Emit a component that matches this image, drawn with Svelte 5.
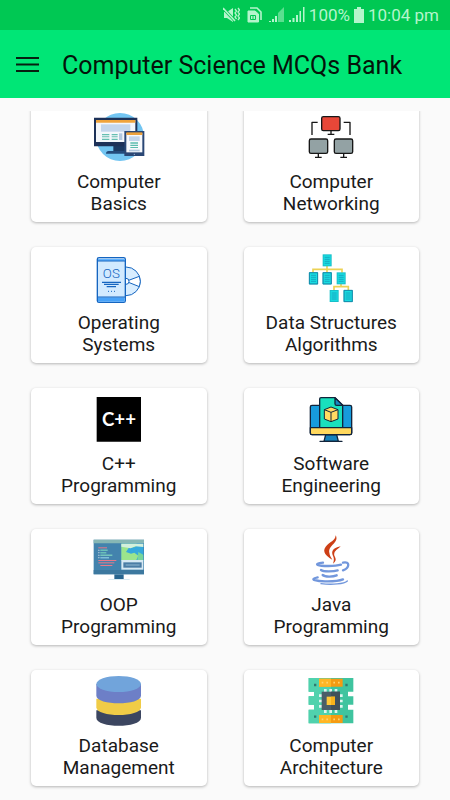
<script>
	// viewBox of each icon is 192 x 150, three units to a pixel
	const topics = [
		{ icon: 'basics', lines: ['Computer', 'Basics'], box: '21 36 192 150' },
		{ icon: 'network', lines: ['Computer', 'Networking'], box: '28 36 192 150' },
		{ icon: 'os', lines: ['Operating', 'Systems'], box: '21 24 192 150' },
		{ icon: 'tree', lines: ['Data Structures', 'Algorithms'], box: '28 24 192 150' },
		{ icon: 'cpp', lines: ['C++', 'Programming'], box: '21 27 192 150' },
		{ icon: 'software', lines: ['Software', 'Engineering'], box: '28 27 192 150' },
		{ icon: 'oop', lines: ['OOP', 'Programming'], box: '21 31 192 150' },
		{ icon: 'java', lines: ['Java', 'Programming'], box: '28 31 192 150' },
		{ icon: 'database', lines: ['Database', 'Management'], box: '201 36 192 150' },
		{ icon: 'chip', lines: ['Computer', 'Architecture'], box: '28 36 192 150' }
	];

	const sheets = [
		[99, 28],
		[58, 82],
		[99, 82],
		[141, 82],
		[120, 135],
		[162, 135]
	];

	// code lines on the OOP monitor: x, y, width, colour
	const code = [
		[55, 68, 26, '#e8798a'],
		[61, 75, 22, '#7fe0c0'],
		[61, 83, 18, '#7fe0c0'],
		[61, 90, 36, '#8fe6c4'],
		[61, 98, 26, '#9fdcf0'],
		[55, 106, 54, '#e8798a'],
		[55, 113, 48, '#e8798a'],
		[61, 121, 36, '#e8798a']
	];
</script>

<div class="screen">
	<header>
		<div class="status">
			<svg width="17" height="16" viewBox="0 0 17 16" fill="currentColor">
				<path d="M1 5h3l6-4v14l-6-4H1z" />
				<path d="M0 1l12 13" stroke="#00c853" stroke-width="3" />
				<path d="M0 1l12 13" stroke="currentColor" stroke-width="1.6" />
				<path
					d="M12 2l1.5 2L12 6l1.5 2L12 10l1.5 2M15 1l1.5 2L15 5l1.5 2L15 9l1.5 2L15 13"
					fill="none"
					stroke="currentColor"
					stroke-width="1.3"
				/>
			</svg>
			<svg class="sim" width="15" height="16" viewBox="0 0 15 16" fill="none" stroke="currentColor">
				<path d="M3 1h7l4 4v8" stroke-width="1.6" />
				<path d="M1 4h7l3.500 3v8H1z" fill="currentColor" />
				<path d="M3.500 8.500h5v4h-5zM6 8.500v4" stroke="#00c853" />
			</svg>
			<svg width="16" height="16" viewBox="0 0 16 16" fill="currentColor">
				<path d="M0 15h2v-1H0zM3 15h2v-3H3zM6 15h2V9H6z" />
				<path d="M9 15V6l6-6v15z" opacity="0.5" />
			</svg>
			<svg width="16" height="16" viewBox="0 0 16 16" fill="currentColor">
				<path d="M0 15h2v-2H0zM3.500 15h2v-4h-2zM7 15h2V8H7zM10.500 15h1.500V4h-1.500zM14 15h1.500V0H14z" />
			</svg>
			<span>100%</span>
			<svg width="10" height="16" viewBox="0 0 10 16" fill="currentColor">
				<path d="M3 0h4v2h3v14H0V2h3z" />
			</svg>
			<span>10:04 pm</span>
		</div>
		<div class="toolbar">
			<button class="menu" aria-label="Menu">
				<svg width="23" height="16" viewBox="0 0 23 16" stroke="#062010" stroke-width="2">
					<path d="M0 2h23M0 8.500h23M0 15h23" />
				</svg>
			</button>
			<h1>Computer Science MCQs Bank</h1>
		</div>
	</header>

	<main>
		<div class="scroller">
			<div class="grid">
				{#each topics as topic}
					<button class="card">
						<svg class="icon" viewBox={topic.box} aria-hidden="true">
							{#if topic.icon === 'basics'}
								<circle cx="120" cy="111" r="72" fill="#72c5f2" />
								<path d="M100 138h38v16h-38z" fill="#1b3a63" />
								<path d="M78 161q0-8 8-8h54v8z" fill="#234b7c" />
								<path d="M42 53h130v86H42z" fill="#1d3158" />
								<path d="M48 60h118v66H48z" fill="#f4f7fb" />
								<path d="M48 60h118v8H48z" fill="#f0a43c" />
								<path d="M63 73h88v22H63z" fill="#c3d6ec" />
								<path d="M66 102h22v4H66zM95 102h18v4H95zM66 109h22v3H66zM95 109h18v3H95zM66 116h22v4H66zM95 116h18v4H95z" fill="#65bfb1" />
								<path d="M117 100h10v20h-10z" fill="#b3c9e0" />
								<path d="M133 93h60v75h-60z" fill="#2a4775" />
								<path d="M139 99h48v58h-48z" fill="#f7f9fc" />
								<path d="M139 97h48v8h-48z" fill="#eda23c" />
								<path d="M147 109h32v14h-32z" fill="#c3d6ec" />
								<path d="M151 127h23v4h-23zM151 134h23v4h-23zM151 141h23v3h-23z" fill="#5cbcae" />
								<path d="M147 149h32v5h-32z" fill="#b3c9e0" />
								<circle cx="163" cy="163" r="2" fill="#9db7d8" />
							{:else if topic.icon === 'network'}
								<g stroke="#171717" stroke-width="4" stroke-linejoin="round">
									<path d="M67 105V67h17M162 67h19v38" fill="none" />
									<rect x="96" y="50" width="55" height="42" rx="5" fill="#e84738" />
									<path d="M124 92v11M114 103h20" />
									<rect x="59" y="117" width="55" height="43" rx="5" fill="#93a2a4" />
									<path d="M86 160v11M76 172h20" />
									<rect x="134" y="117" width="55" height="43" rx="5" fill="#93a2a4" />
									<path d="M162 160v11M152 172h20" />
								</g>
							{:else if topic.icon === 'os'}
								<g stroke="#1565c0" stroke-width="3" fill="none">
									<circle cx="138" cy="109" r="43" fill="#d8edff" />
									<path d="M138 109l40-15q6 15 0 31z" fill="#fff" />
									<circle cx="138" cy="109" r="9" fill="#fff" />
									<rect x="52" y="38" width="84" height="134" rx="5" fill="#d2eaff" stroke-width="4" />
									<path d="M54 42h80v6H54z" fill="#62b3ff" stroke="none" />
									<path d="M54 157h80v13H54z" fill="#48a2f8" stroke="none" />
									<path d="M53 48h82M53 156h82" />
									<path d="M66 112h57M72 118h44M80 125h28" stroke-width="4" />
									<path d="M84 139h3M93 139h3M102 139h3" stroke-width="3" />
								</g>
								<text class="os" x="94" y="98" text-anchor="middle">OS</text>
							{:else if topic.icon === 'tree'}
								<path
									d="M112 63v20M70 83V73h87v10M154 117v9M133 135v-10h43v10"
									fill="none"
									stroke="#ecd255"
									stroke-width="5"
								/>
								{#each sheets as [x, y]}
									<g transform="translate({x} {y})">
										<path d="M0 0h27v36H0z" fill="#17bfc9" />
										<path d="M3 3h21v30H3z" fill="#18dce0" />
										<path d="M6 9h15M6 15h15M6 21h15M6 27h15" stroke="#168fb4" stroke-width="2" />
									</g>
								{/each}
								<path d="M59 83h25v34H59zM100 83h25v34h-25zM163 136h25v34h-25z" fill="none" stroke="#168bab" stroke-width="3" />
							{:else if topic.icon === 'cpp'}
								<path d="M50 36h133v134H50z" fill="#000" />
								<text class="cpp" x="117" y="123" text-anchor="middle">C++</text>
							{:else if topic.icon === 'software'}
								<g stroke="#12243b" stroke-width="4" stroke-linejoin="round">
									<path d="M108 149h33l5 20h-43z" fill="#1583bd" />
									<path d="M91 169h66" stroke-linecap="round" />
									<rect x="62" y="61" width="124" height="88" rx="5" fill="#179bdc" />
									<path d="M90 128V42q0-4 4-4h42l23 23v67z" fill="#19e0bd" />
									<path d="M136 38v18q0 5 5 5h18z" fill="#168ac4" />
									<path d="M62 128h124v16q0 5-5 5H67q-5 0-5-5z" fill="#ffd85d" />
									<path d="M104 74l20-8 21 8v28l-21 8-20-8z" fill="#ffda62" stroke-width="3" />
									<path d="M104 74l20 8 21-8M124 82v28" fill="none" stroke-width="3" />
								</g>
							{:else if topic.icon === 'oop'}
								<path d="M85 163h64v3H85z" fill="#d8eaf2" />
								<path d="M103 149h28v14h-28z" fill="#28658f" />
								<path d="M41 45h151v104H41z" fill="#4383ad" />
								<path d="M41 45h151v11H41z" fill="#87b7b5" />
								<path d="M41 136h151v13H41z" fill="#3c789f" />
								{#each code as [x, y, w, color]}
									<path d="M{x} {y}h{w}v3h-{w}z" fill={color} />
								{/each}
								<path d="M55 76h3v1h-3zM55 84h3v1h-3zM55 91h3v1h-3zM55 99h3v1h-3z" fill="#fff" stroke="#fff" />
								<path d="M124 57h66v51h-66z" fill="#36a9dc" />
								<path d="M124 57h46l-4 10-20 3-8 12 15 5 10-3 12 9-7 15h-44z" fill="#9be58c" />
								<path d="M124 57h66v10l-24-2-14 6-28-5z" fill="#d3f0dc" />
								<path d="M175 82l15 8v18h-18z" fill="#77d69b" />
								<path d="M124 106h66v29h-66z" fill="#d7e9f3" />
								<path d="M130 113h55v16h-55z" fill="#4b7da5" />
								<path d="M137 121h42" stroke="#93bad2" stroke-width="3" />
							{:else if topic.icon === 'java'}
								<path d="M138 32c12 23-23 29-19 52 1 9 5 14 9 21-17-10-32-23-20-39 12-15 29-17 30-34z" fill="#cd3f16" />
								<path d="M153 65c-15 3-28 10-25 23 2 8 8 13 2 29 18-15 0-20 4-32 3-9 14-13 19-20z" fill="#cd3f16" />
								<g fill="none" stroke="#7297dc" stroke-width="7" stroke-linecap="round">
									<path d="M100 114c-34 4-14 10 16 10 14 0 28-1 38-4" />
									<path d="M160 114c22-5 20 16 0 23" />
									<path d="M94 136c8 6 38 5 50 1" />
									<path d="M99 151c7 6 30 6 42 1" />
									<path d="M84 158c-30 6-2 13 30 12 18 0 36-2 46-6" />
									<path d="M94 177c33 4 70 1 79-8" stroke-width="4" />
								</g>
							{:else if topic.icon === 'database'}
								<path d="M229 139v22c0 32 134 32 134 0v-22z" fill="#3c4660" />
								<path d="M229 104v26c0 31 134 31 134 0v-26z" fill="#f0cc47" />
								<path d="M229 60v35c0 30 134 30 134 0V60z" fill="#6d7fc7" />
								<ellipse cx="296" cy="60" rx="67" ry="24" fill="#71a4db" />
							{:else if topic.icon === 'chip'}
								<path
									d="M57 42h134v41h-16v14h16v25h-16v15h16v41H57v-41h16v-15H57V97h16V83H57z"
									fill="#3fc49f"
								/>
								<path d="M57 42h67v136H57v-41h16v-15H57V97h16V83H57z" fill="#50d2ad" />
								<path d="M88 44h71v24H88zM88 153h71v24H88z" fill="#f59b12" />
								<path d="M88 44h36v24H88zM88 153h36v24H88z" fill="#ffb625" />
								<path d="M96 56h5M110 56h5M131 56h5M145 56h5M96 166h5M110 166h5M131 166h5M145 166h5" stroke="#ffd36d" stroke-width="5" />
								<path d="M73 63h7M167 63h7M73 158h7M167 158h7" stroke="#32796f" stroke-width="7" />
								<path
									d="M107 75v10M123 75v10M139 75v10M107 137v10M123 137v10M139 137v10M88 95h10M88 111h10M88 127h10M149 95h10M149 111h10M149 127h10"
									stroke="#dff5ef"
									stroke-width="8"
								/>
								<path d="M96 83h55v55H96z" fill="#4b5e68" />
								<path d="M124 83h27v55h-27z" fill="#40515b" />
								<path d="M111 98h25v25h-25z" fill="#ffc83a" />
								<path d="M124 98h12v25h-12z" fill="#f7b21b" />
							{/if}
						</svg>
						<span class="label">{topic.lines[0]}<br />{topic.lines[1]}</span>
					</button>
				{/each}
			</div>
		</div>
	</main>
</div>

<style>
	:global(body) {
		background: #fafafa;
	}

	.screen {
		min-height: 100vh;
		overflow: hidden;
		font-family: Roboto, sans-serif;
		background: #fafafa;
	}

	header {
		background: #00e676;
	}

	.status {
		display: flex;
		align-items: center;
		justify-content: flex-end;
		gap: 4px;
		height: 30px;
		padding-right: 11px;
		background: #00c853;
		color: #b5f5cc;
		font-size: 17px;
	}

	.sim {
		margin: 0 3px;
	}

	.toolbar {
		display: flex;
		align-items: center;
		gap: 23px;
		height: 68px;
		padding: 0 16px;
	}

	.menu {
		display: flex;
		padding: 0;
		border: none;
		background: none;
	}

	h1 {
		margin: 0;
		padding-top: 4px;
		font-size: 25px;
		font-weight: 400;
		line-height: 32px;
		white-space: nowrap;
		color: #04140a;
	}

	main {
		padding-top: 13px;
	}

	.scroller {
		overflow: hidden;
		padding-bottom: 12px;
	}

	/* list is scrolled a little, so the first row is cut at the top */
	.grid {
		display: grid;
		grid-template-columns: 1fr 1fr;
		gap: 25px 37px;
		margin-top: -5px;
		padding: 0 31px;
	}

	.card {
		display: flex;
		flex-direction: column;
		align-items: center;
		gap: 9px;
		padding: 6px 0 7px;
		border: none;
		border-radius: 5px;
		background: #fff;
		box-shadow: 0 1px 3px rgba(0, 0, 0, 0.28);
		font-family: inherit;
		color: #1a1a1a;
	}

	.icon {
		width: 64px;
		height: 50px;
	}

	.label {
		font-size: 19px;
		line-height: 22px;
		text-align: center;
	}

	.os {
		font-family: 'Liberation Sans Narrow', Roboto, sans-serif;
		font-size: 40px;
		font-weight: 300;
		fill: #1565c0;
	}

	.cpp {
		font-family: Lato, sans-serif;
		font-size: 56px;
		font-weight: 700;
		fill: #fff;
	}
</style>
